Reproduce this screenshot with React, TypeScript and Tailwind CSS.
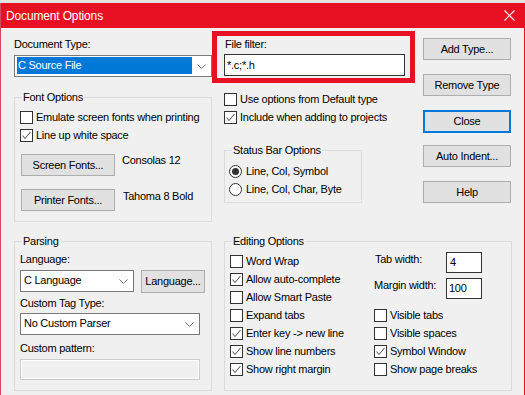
import React from "react";

function Check() {
  return (
    <svg width="11" height="11" viewBox="0 0 11 11" className="block">
      <path d="M1.5 5.5 L4 8.5 L9.5 2" fill="none" stroke="#666666" strokeWidth="1.1" />
    </svg>
  );
}

function CheckBox({ checked }: { checked?: boolean }) {
  return (
    <span className="flex h-[13px] w-[13px] shrink-0 items-center justify-center border border-[#333333] bg-white">
      {checked ? <Check /> : null}
    </span>
  );
}

function CheckRow({ label, checked, className = "" }: { label: string; checked?: boolean; className?: string }) {
  return (
    <div className={`flex h-[13px] items-center gap-[3px] ${className}`}>
      <CheckBox checked={checked} />
      <span className="whitespace-nowrap leading-[13px]">{label}</span>
    </div>
  );
}

function Radio({ label, checked, className = "" }: { label: string; checked?: boolean; className?: string }) {
  return (
    <div className={`flex h-[13px] items-center gap-[4px] ${className}`}>
      <span className="flex h-[13px] w-[13px] shrink-0 items-center justify-center rounded-full border border-[#333333] bg-white">
        {checked ? <span className="h-[7px] w-[7px] rounded-full bg-[#333333]" /> : null}
      </span>
      <span className="whitespace-nowrap leading-[13px]">{label}</span>
    </div>
  );
}

function Btn({ children, className = "", primary }: { children: React.ReactNode; className?: string; primary?: boolean }) {
  return (
    <div
      className={`flex shrink-0 items-center justify-center whitespace-nowrap bg-[#e1e1e1] leading-[13px] ${
        primary ? "border-2 border-[#0078d7]" : "border border-[#adadad]"
      } ${className}`}
    >
      {children}
    </div>
  );
}

function Group({ title, className = "", children }: { title: string; className?: string; children: React.ReactNode }) {
  return (
    <div className={`relative shrink-0 border border-[#dcdcdc] ${className}`}>
      <span className="absolute left-[7px] top-[-7px] whitespace-nowrap bg-[#f0f0f0] px-[1px] leading-[13px]">{title}</span>
      {children}
    </div>
  );
}

function Chevron() {
  return (
    <svg width="9" height="5" viewBox="0 0 9 5" className="block">
      <path d="M0.5 0.5 L4.5 4.5 L8.5 0.5" fill="none" stroke="#707070" strokeWidth="1" />
    </svg>
  );
}

function Select({ text, selected, className = "" }: { text: string; selected?: boolean; className?: string }) {
  return (
    <div className={`flex h-[22px] shrink-0 border border-[#7a7a7a] bg-white ${className}`}>
      <div className="min-w-0 flex-1 pb-[2px] pl-[2px] pt-[1px]">
        <div
          className={
            selected
              ? "flex h-full items-center bg-[#0078d7] pl-[1px] leading-[13px] text-white"
              : "flex h-full items-center pl-[1px] leading-[13px]"
          }
        >
          {text}
        </div>
      </div>
      <div className="flex w-[19px] items-center justify-center">
        <Chevron />
      </div>
    </div>
  );
}

export default function App() {
  return (
    <div className="h-[395px] w-[525px] overflow-hidden bg-[#e3e3e3] pt-[3px] font-[family-name:Liberation_Sans,Arial,sans-serif] text-[11px] tracking-[-0.25px] text-black">
      <div className="h-[392px] border-l border-r border-l-[#d24a5a] border-r-[#e81123] bg-[#f0f0f0]">
        {/* Title bar */}
        <div className="flex h-[25px] items-center justify-between bg-[#e81123] pl-[5px] pr-[9px] text-white">
          <span className="text-[12px] tracking-[-0.15px]">Document Options</span>
          <svg width="11" height="11" viewBox="0 0 11 11" className="block">
            <path d="M0.5 0.5 L10.5 10.5 M10.5 0.5 L0.5 10.5" stroke="#ffffff" strokeWidth="1.1" />
          </svg>
        </div>

        {/* Top section */}
        <div className="flex items-start">
          {/* Column A */}
          <div className="ml-[13px] flex w-[198px] flex-col">
            <span className="mt-[10px] leading-[13px]">Document Type:</span>
            <Select className="mt-[4px] w-[198px]" text="C Source File" selected />
            <Group title="Font Options" className="mt-[20px] h-[125px] w-[198px]">
              <div className="flex flex-col pl-[5px] pt-[13px]">
                <CheckRow label="Emulate screen fonts when printing" />
                <CheckRow className="mt-[5px]" checked label="Line up white space" />
                <div className="mt-[12px] flex items-start">
                  <Btn className="ml-[1px] h-[22px] w-[94px]">Screen Fonts...</Btn>
                  <span className="ml-[7px] whitespace-nowrap leading-[13px]">Consolas 12</span>
                </div>
                <div className="mt-[13px] flex items-start">
                  <Btn className="ml-[1px] h-[22px] w-[94px]">Printer Fonts...</Btn>
                  <span className="ml-[8px] mt-[1px] whitespace-nowrap leading-[13px]">Tahoma 8 Bold</span>
                </div>
              </div>
            </Group>
          </div>

          {/* Column B */}
          <div className="flex w-[203px] flex-col">
            <div className="mt-[3px] h-[52px] w-[203px] border-[5px] border-[#e81123] pl-[7px] pt-[2px]">
              <div className="pl-[1px] leading-[13px]">File filter:</div>
              <div className="mt-[3px] flex h-[22px] w-[181px] items-center border border-[#333333] bg-white pl-[2px] leading-[13px]">
                *.c;*.h
              </div>
            </div>
            <CheckRow className="ml-[12px] mt-[10px]" label="Use options from Default type" />
            <CheckRow className="ml-[12px] mt-[5px]" checked label="Include when adding to projects" />
            <Group title="Status Bar Options" className="ml-[12px] mt-[26px] h-[53px] w-[138px]">
              <div className="flex flex-col pl-[4px] pt-[14px]">
                <Radio checked label="Line, Col, Symbol" />
                <Radio className="mt-[5px]" label="Line, Col, Char, Byte" />
              </div>
            </Group>
          </div>

          {/* Column C */}
          <div className="ml-[8px] flex w-[88px] flex-col">
            <Btn className="mt-[10px] h-[22px] w-[88px]">Add Type...</Btn>
            <Btn className="mt-[14px] h-[22px] w-[88px]">Remove Type</Btn>
            <Btn className="mt-[14px] h-[23px] w-[88px]" primary>
              Close
            </Btn>
            <Btn className="mt-[12px] h-[22px] w-[88px]">Auto Indent...</Btn>
            <Btn className="mt-[14px] h-[22px] w-[88px]">Help</Btn>
          </div>
        </div>

        {/* Bottom section */}
        <div className="mt-[19px] flex items-start">
          <Group title="Parsing" className="ml-[13px] h-[150px] w-[198px]">
            <div className="flex flex-col pl-[5px] pt-[11px]">
              <span className="leading-[13px]">Language:</span>
              <div className="mt-[4px] flex items-start">
                <Select className="w-[114px]" text="C Language" />
                <Btn className="ml-[7px] h-[23px] w-[64px]">Language...</Btn>
              </div>
              <span className="mt-[4px] leading-[13px]">Custom Tag Type:</span>
              <Select className="mt-[3px] w-[180px]" text="No Custom Parser" />
              <span className="mt-[7px] leading-[13px]">Custom pattern:</span>
              <div className="mt-[4px] h-[21px] w-[180px] border border-[#cccccc] shadow-[inset_0_0_0_1px_#ffffff]" />
            </div>
          </Group>

          <Group title="Editing Options" className="ml-[12px] h-[150px] w-[288px]">
            <div className="flex pl-[5px] pt-[10px]">
              <div className="flex w-[144px] flex-col gap-[5px] pt-[3px]">
                <CheckRow label="Word Wrap" />
                <CheckRow checked label="Allow auto-complete" />
                <CheckRow label="Allow Smart Paste" />
                <CheckRow label="Expand tabs" />
                <CheckRow checked label="Enter key -> new line" />
                <CheckRow checked label="Show line numbers" />
                <CheckRow checked label="Show right margin" />
              </div>
              <div className="flex flex-col">
                <div className="flex items-start">
                  <span className="mt-[1px] w-[72px] pl-[1px] leading-[13px]">Tab width:</span>
                  <div className="flex h-[21px] w-[36px] items-center border border-[#333333] bg-white pl-[3px] leading-[13px]">4</div>
                </div>
                <div className="mt-[5px] flex items-start">
                  <span className="mt-[1px] w-[72px] whitespace-nowrap leading-[13px]">Margin width:</span>
                  <div className="flex h-[21px] w-[36px] items-center border border-[#333333] bg-white pl-[2px] leading-[13px]">100</div>
                </div>
                <div className="mt-[10px] flex flex-col gap-[5px]">
                  <CheckRow label="Visible tabs" />
                  <CheckRow label="Visible spaces" />
                  <CheckRow checked label="Symbol Window" />
                  <CheckRow label="Show page breaks" />
                </div>
              </div>
            </div>
          </Group>
        </div>
      </div>
    </div>
  );
}
